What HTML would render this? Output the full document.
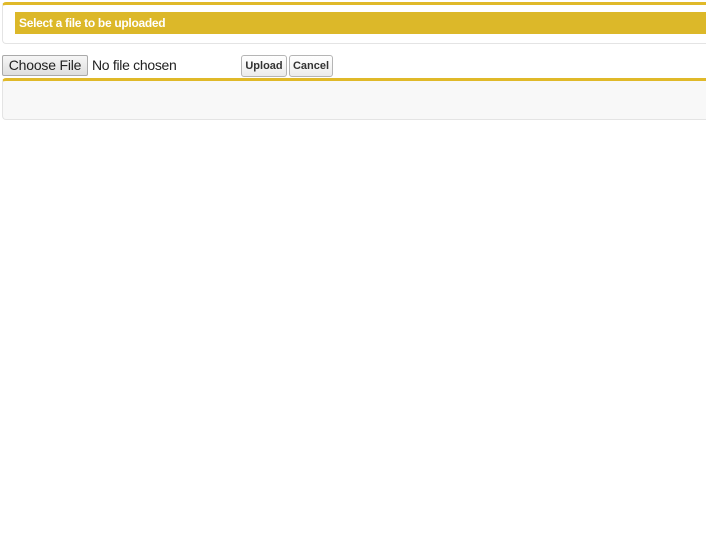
<!DOCTYPE html>
<html><head><style>
body{margin:0;width:706px;height:556px;background:#fff;font-family:"Liberation Sans",Arial,sans-serif;position:relative;overflow:hidden}
.box1{position:absolute;left:2px;top:2px;width:710px;height:38px;border-top:3px solid #e0b929;border-left:1px solid #e4e4e4;border-bottom:1px solid #e4e4e4;border-radius:4px;background:#fff}
.bar{position:absolute;left:15px;top:12px;width:700px;height:22px;background:#dcb829;color:#fff;font-weight:bold;font-size:12px;letter-spacing:-0.3px;line-height:22px;padding-left:4px;box-sizing:border-box}
.cf{position:absolute;left:2px;top:55px;width:86px;height:21px;box-sizing:border-box;border:1px solid #aaa;background:linear-gradient(#f6f6f6,#dedede);font-size:14px;letter-spacing:-0.2px;line-height:19px;text-align:center;color:#222;border-radius:2px}
.nf{position:absolute;left:92px;top:57px;font-size:14px;letter-spacing:-0.3px;color:#222}
.btn{position:absolute;top:55px;height:22px;box-sizing:border-box;border:1px solid #b5b5b5;border-radius:3px;background:linear-gradient(#fff,#ececec);font-size:11px;font-weight:bold;color:#333;line-height:21px;text-align:center}
.box2{position:absolute;left:2px;top:78px;width:710px;height:38px;border-top:3px solid #e0b929;border-left:1px solid #e4e4e4;border-bottom:1px solid #e4e4e4;border-radius:4px;background:#f8f8f8}
</style></head><body>
<div class="box1"></div>
<div class="bar">Select a file to be uploaded</div>
<div class="cf">Choose File</div>
<div class="nf">No file chosen</div>
<div class="btn" style="left:241px;width:46px">Upload</div>
<div class="btn" style="left:289px;width:44px">Cancel</div>
<div class="box2"></div>
</body></html>
